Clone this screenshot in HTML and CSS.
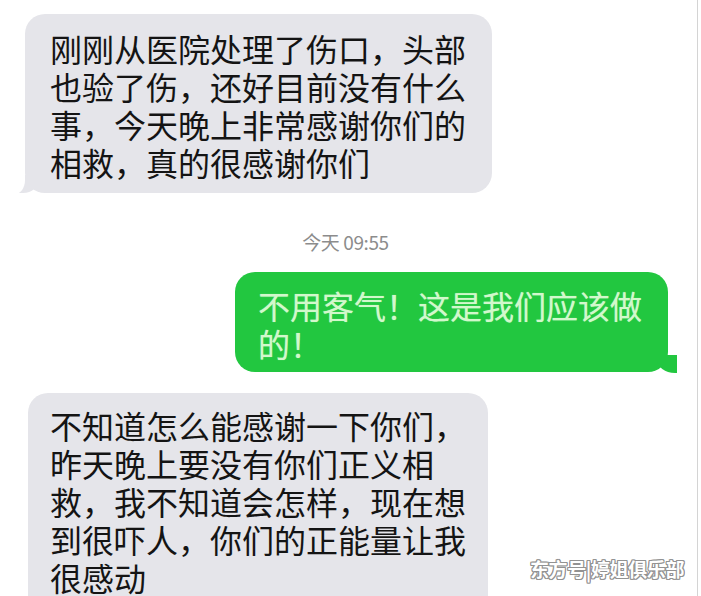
FILE: index.html
```html
<!DOCTYPE html>
<html lang="zh-CN">
<head>
<meta charset="utf-8">
<title>短信</title>
<link rel="stylesheet" href="styles.css">
</head>
<body>
<div class="screen">
  <div class="thread">
    <div class="bubble bubble-in first">刚刚从医院处理了伤口，头部<br>也验了伤，还好目前没有什么<br>事，今天晚上非常感谢你们的<br>相救，真的很感谢你们</div>
    <div class="stamp">今天 09:55</div>
    <div class="bubble bubble-out">不用客气！这是我们应该做<br>的！</div>
    <div class="bubble bubble-in last">不知道怎么能感谢一下你们，<br>昨天晚上要没有你们正义相<br>救，我不知道会怎样，现在想<br>到很吓人，你们的正能量让我<br>很感动</div>
  </div>
  <div class="mark">东方号|婷姐俱乐部</div>
</div>
</body>
</html>
```

FILE: styles.css
```css
html, body {
  margin: 0;
  padding: 0;
  background: #ffffff;
}

.screen {
  position: relative;
  width: 697px;
  height: 596px;
  overflow: hidden;
  border-right: 1px solid #d4d4d4;
  font-family: "Noto Sans CJK SC", "Noto Sans", sans-serif;
}

.thread {
  display: flex;
  flex-direction: column;
  padding-top: 14px;
}

.bubble {
  position: relative;
  font-size: 32px;
  line-height: 38px;
  white-space: nowrap;
  border-radius: 20px;
}

.bubble-in {
  align-self: flex-start;
  background: #e5e5ea;
  color: #141414;
  margin-left: 25px;
  padding: 15px 20px 12px 25px;
}

.bubble-in.first {
  width: 422px;
}

.bubble-in.last {
  margin-left: 28px;
  margin-top: 21px;
  width: 418px;
  padding: 13px 20px 20px 22px;
}

/* little tail at the lower left of incoming bubbles */
.bubble-in.first::before {
  content: "";
  position: absolute;
  left: -6px;
  bottom: 0;
  width: 20px;
  height: 18px;
  background: #e5e5ea;
  border-bottom-right-radius: 16px 14px;
}

.bubble-in.first::after {
  content: "";
  position: absolute;
  left: -14px;
  bottom: -1px;
  width: 14px;
  height: 20px;
  background: #ffffff;
  border-bottom-right-radius: 10px 14px;
}

.stamp {
  align-self: center;
  margin-top: 38px;
  margin-left: -6px;
  font-size: 19px;
  line-height: 22px;
  color: #8c8c8c;
  letter-spacing: -0.4px;
}

.bubble-out {
  align-self: flex-start;
  margin-left: 235px;
  margin-top: 19px;
  width: 390px;
  padding: 14px 20px 10px 23px;
  background: #22c740;
  color: #d2f8cc;
  text-shadow: 0 0 1px rgba(210, 248, 204, 0.6);
}

/* tail at the lower right of the sent bubble */
.bubble-out::before {
  content: "";
  position: absolute;
  right: -9px;
  bottom: -1px;
  width: 20px;
  height: 18px;
  background: #22c740;
  border-bottom-left-radius: 18px 14px;
}

.bubble-out::after {
  content: "";
  position: absolute;
  right: -19px;
  bottom: -2px;
  width: 10px;
  height: 22px;
  background: #ffffff;
  border-bottom-left-radius: 10px 14px;
}

.mark {
  position: absolute;
  left: 530px;
  top: 557px;
  font-size: 19px;
  line-height: 24px;
  letter-spacing: -0.4px;
  color: #ffffff;
  font-weight: bold;
  text-shadow:
    1px 0 0 #929292, -1px 0 0 #929292,
    0 1px 0 #929292, 0 -1px 0 #929292,
    1px 1px 0 #929292, -1px -1px 0 #929292,
    1px -1px 0 #929292, -1px 1px 0 #929292;
}
```
